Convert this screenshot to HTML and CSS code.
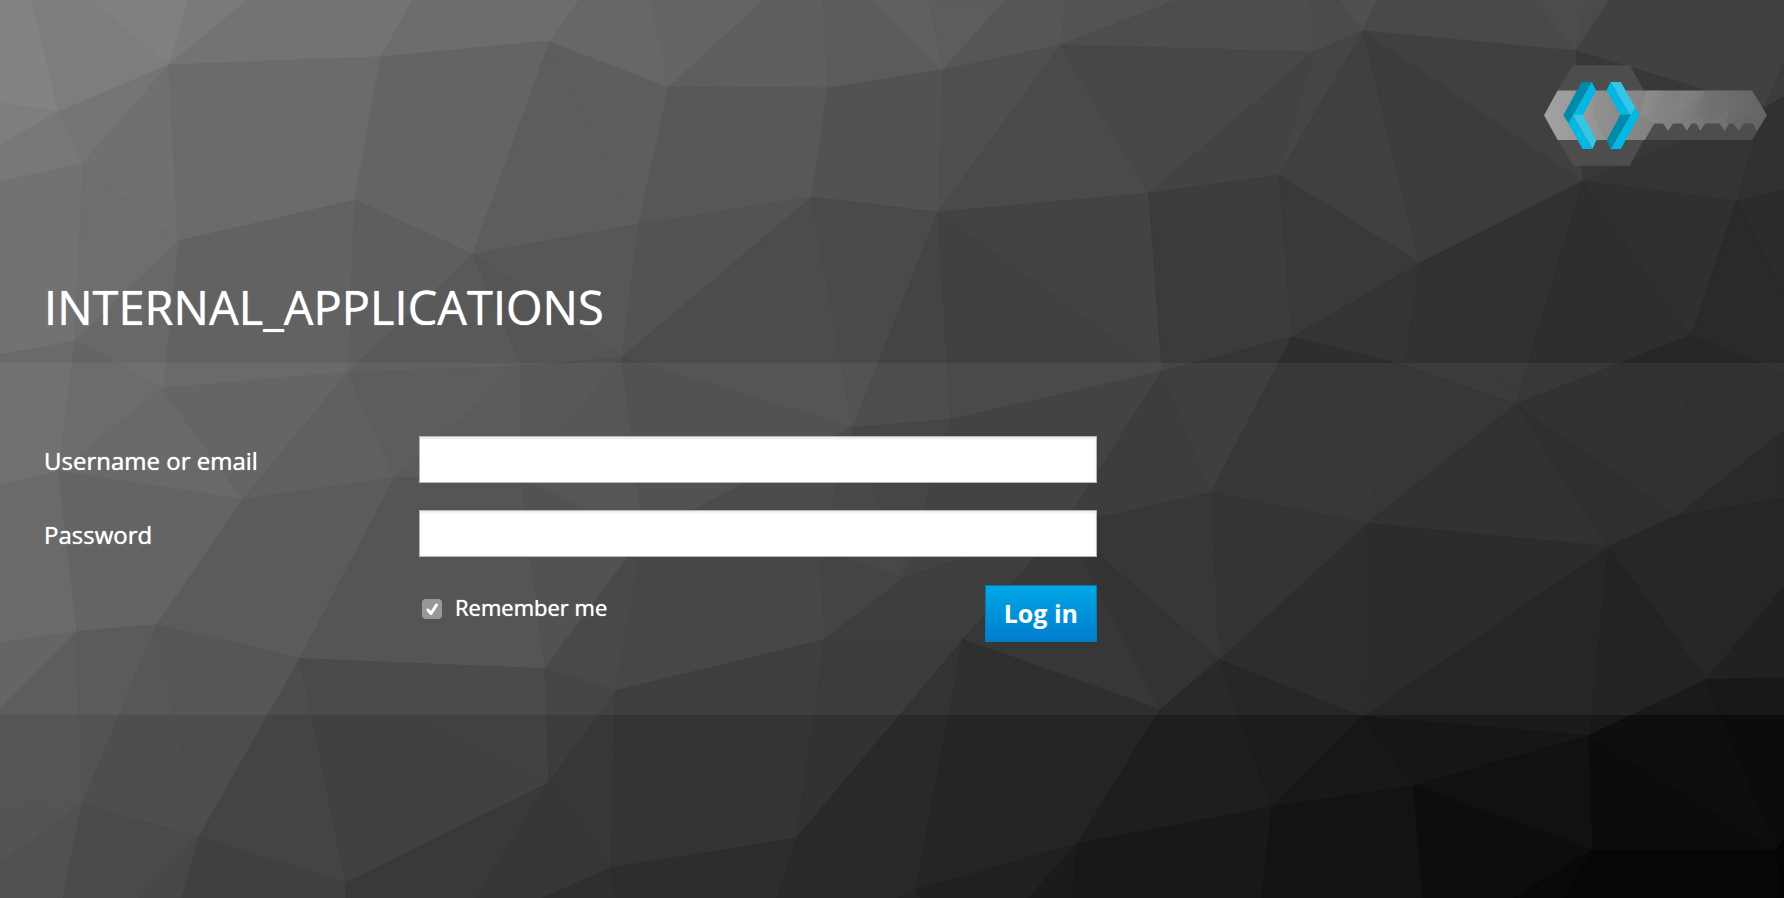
FILE: index.html
```html
<!DOCTYPE html>
<html lang="en">
<head>
<meta charset="utf-8">
<title>Log in to internal_applications</title>
<link rel="stylesheet" href="styles.css">
</head>
<body>
<div class="page">
  <svg class="backdrop" id="backdrop" viewBox="0 0 1784 897" preserveAspectRatio="none" aria-hidden="true"></svg>

  <header class="header">
    <svg class="logo" viewBox="40 43 675 304" role="img" aria-label="Keycloak">
      <defs>
        <linearGradient id="shaft" x1="0" y1="0" x2="1" y2="0">
          <stop offset="0" stop-color="#a2a2a2"/>
          <stop offset="0.4" stop-color="#8c8c8c"/>
          <stop offset="0.75" stop-color="#757575"/>
          <stop offset="1" stop-color="#686868"/>
        </linearGradient>
      </defs>
      <path fill="#4d4d4d" d="M83 120 130 44H300L342 120H668L713 194 668 269H342L300 346H130L83 269Z"/>
      <path fill="url(#shaft)" d="M83 120H668L713 194 683 241 670 219H643L628 241 612 219H600L585 241 570 219H527L512 241 500 219H486L472 241 458 219H430L416 241 400 219H374L345 269H83L42 194Z"/>
      <path fill="#000" fill-opacity="0.03" d="M196 120 190 194 228 269H345L374 219 330 194 350 120ZM530 120 490 194 540 219 600 178 713 206V194L668 120Z"/>
      <path fill="#000" fill-opacity="0.05" d="M600 178 588 219H612L628 241 643 219H670L683 241 706 206Z"/>
      <path fill="#fff" fill-opacity="0.03" d="M350 120H395L366 194 330 194ZM460 120H530L450 190 425 180Z"/>
      <path fill="#008aaa" d="M155 94H186L131 192 116 219 100 194Z"/>
      <path fill="#00b8e3" d="M186 94 199 120 158 194H130ZM130 194 188 296H158L115 218Z"/>
      <path fill="#33c6e9" d="M130 192H158L199 270 188 296Z"/>
      <path fill="#33c6e9" d="M242 94H273L317 172 302 194Z"/>
      <path fill="#00b8e3" d="M242 94 230 120 272 194H302ZM317 172 329 194 273 296H242L302 194Z"/>
      <path fill="#008aaa" d="M272 192H303L243 296 230 270Z"/>
    </svg>
    <h1 class="title">INTERNAL_APPLICATIONS</h1>
  </header>

  <main class="panel">
    <form class="form">
      <label class="label" for="username">Username or email</label>
      <input class="field" id="username" name="username" type="text">
      <label class="label" for="password">Password</label>
      <input class="field" id="password" name="password" type="password">
      <div class="actions">
        <label class="remember" for="remember">
          <span class="tick">
            <input class="tick-box" id="remember" name="remember" type="checkbox" checked>
            <svg class="tick-mark" viewBox="0 0 20 20" aria-hidden="true"><path d="M6 11 9 14.500 14.500 6"/></svg>
          </span>
          Remember me
        </label>
        <button class="login" type="button">Log in</button>
      </div>
    </form>
  </main>
</div>
<script src="mesh.js"></script>
</body>
</html>
```

FILE: styles.css
```css
* {
  box-sizing: border-box;
}

body {
  margin: 0;
  background: #1a1a1a;
  color: #fff;
  font-family: "Open Sans", "Liberation Sans", sans-serif;
}

.page {
  position: relative;
  min-height: 100vh;
  overflow: hidden;
  isolation: isolate;
}

.backdrop {
  position: absolute;
  inset: 0;
  z-index: -1;
  width: 100%;
  height: 100%;
}

.backdrop polygon {
  fill: currentColor;
  stroke: currentColor;
  stroke-width: 1;
}

.header {
  display: flex;
  flex-direction: column;
  padding: 65px 16px 25px 44px;
}

.logo {
  align-self: flex-end;
  width: 225px;
  height: 101px;
}

.title {
  margin: 110px 0 0;
  font-size: 47px;
  font-weight: 400;
  line-height: 62px;
}

.title,
.label,
.remember {
  text-shadow: 0 0 1px #fff;
}

.panel {
  padding: 73px 44px;
  background: rgba(255, 255, 255, 0.05);
}

.form {
  display: grid;
  grid-template-columns: minmax(120px, 375px) 1fr;
  row-gap: 27px;
  max-width: 1053px;
}

.label {
  padding-top: 2px;
  align-self: center;
  font-size: 24px;
  line-height: 32px;
}

.field {
  width: 100%;
  height: 47px;
  padding: 4px 12px;
  border: 1px solid #b6b6b6;
  border-radius: 0;
  background: #fff;
  box-shadow: inset 0 2px 2px rgba(0, 0, 0, 0.08);
  color: #333;
  font: inherit;
  font-size: 24px;
}

.actions {
  grid-column: 2;
  display: flex;
  align-items: flex-start;
  justify-content: space-between;
  padding-top: 1px;
}

.remember {
  display: flex;
  align-items: center;
  gap: 13px;
  padding: 6px 3px;
  font-size: 22px;
  line-height: 32px;
}

.tick {
  display: grid;
  padding-top: 4px;
}

.tick-box,
.tick-mark {
  grid-area: 1 / 1;
  width: 20px;
  height: 20px;
  margin: 0;
}

.tick-box {
  appearance: none;
  border-radius: 4px;
  background: #97979e;
}

.tick-mark {
  fill: none;
  stroke: #fff;
  stroke-width: 3;
  stroke-linecap: round;
  stroke-linejoin: round;
  pointer-events: none;
  visibility: hidden;
}

.tick-box:checked + .tick-mark {
  visibility: visible;
}

.login {
  padding: 11px 18px;
  border: 1px solid #0e78ae;
  border-radius: 0;
  background: linear-gradient(#00a8e5, #007dcf);
  color: #fff;
  font: inherit;
  font-size: 25px;
  font-weight: 700;
  line-height: 33px;
}
```

FILE: mesh.js
```js
// Low-poly backdrop: named vertices, then faces listed as "vertices : grey level".
const points = {
  A: "169,65", B: "59,112", C: "83,163", D: "178,241", E: "381,57", F: "550,41",
  G: "355,200", H: "473,254", I: "75,341", J: "163,388", K: "348,372", L: "522,366",
  M: "669,87", N: "828,88", O: "943,70", P: "1061,45", Q: "812,197", R: "938,212",
  S: "1149,193", T: "622,357", U: "853,427", V: "951,419", W: "1162,371", X: "639,224",
  Y: "1314,52", Z: "1363,31",
  a: "1576,51", b: "1279,175", c: "1420,263", d: "1583,181", e: "1737,201", f: "1691,335",
  g: "1292,337", h: "1516,404", i: "1405,365", j: "1764,108", k: "243,499", l: "59,471",
  m: "77,631", n: "157,624", o: "300,658", p: "545,668", q: "395,477", r: "82,804",
  s: "199,836", t: "346,882", u: "549,782", v: "521,479", w: "644,535",
  x1: "616,690", y1: "825,639", z1: "820,549",
  A2: "904,577", B2: "963,639", C2: "1064,525", D2: "1160,709", E2: "1219,659", F2: "797,837",
  G2: "916,889", H2: "1077,843", I2: "611,867", J2: "1272,806", K2: "1367,523", L2: "1608,546",
  M2: "1678,515", N2: "1706,679", O2: "1362,716", P2: "1589,735", Q2: "1414,785",
  R2: "1593,849", S2: "1777,849", g2: "1211,492"
};

const faces = `
0,0 32,0 B 0,103:131
32,0 92,0 A B:125
92,0 189,0 A:128
189,0 248,0 A:122
248,0 413,0 E A:115
413,0 580,0 F E:109
0,103 B 0,145:126
0,145 B C 0,182:120
B A C:117
0,182 C I 0,354:114
C A D:112
C D I:110
A E G D:107
E F H G:100
D G K J:98
D J I:104
G H K:94
H L K:89
F X H:93
F M X:94
580,0 651,0 M F:103
651,0 764,0 M:101
764,0 823,0 N M:94
823,0 872,0 O N:91
872,0 929,0 O:96
929,0 1006,0 O:93
1006,0 1066,0 P O:86
1066,0 1177,0 P:83
1177,0 1311,0 Y P:77
M Q X:87
M N Q:88
N O R Q:82
O P R:79
P S R:74
P Y S:71
1311,0 1340,0 Z Y:75
1340,0 1377,0 Z:80
1377,0 1533,0 a Z:73
1533,0 1586,0 a:76
1586,0 1610,0 a:74
1610,0 1784,0 1784,62 j a:65
1784,62 1784,97 j:60
Y b S:67
Y Z b:69
Z c b:64
Z d c:60
Z a d:64
a j d:56
j e d:52
j 1784,97 1784,189 e:49
H X T:87
H T L:85
X Q T:83
Q U T:76
Q R U:74
R V U:68
R W V:65
R S W:67
S g W:59
S b g:61
b c g:57
g c i:52
c h i:50
c d h:49
d f h:46
d e f:48
e 1784,189 1784,290:44
e 1784,290 1784,373 f:42
0,354 I l 0,485:106
I J l:101
0,485 l m 0,642:99
l J k:97
l k n m:92
J K k:93
K q k:88
K L q:85
L v q:83
L T v:80
T w v:77
T U w:73
n k q o:83
q v p o:76
v w p:73
w x1 p:64
w z1 y1 x1:62
w U z1:66
U A2 z1:63
U V A2:61
z1 A2 y1:58
V W C2 A2:57
A2 C2 B2:52
A2 B2 y1:52
W g2 C2:51
W g g2:53
g i K2 g2:46
i h K2:45
h L2 K2:39
h M2 L2:36
h f M2:39
f 1784,373 1784,430 M2:38
M2 1784,430 1784,498:31
M2 1784,498 1784,587 N2:27
N2 1784,587 1784,677:22
M2 N2 L2:28
L2 N2 P2:24
L2 P2 O2:27
L2 O2 K2:33
K2 O2 E2:34
g2 K2 E2:42
g2 E2 C2:45
C2 E2 D2:41
C2 D2 B2:45
0,642 m 0,708:93
0,708 m r 0,806:85
m n r:83
n s r:78
n o s:77
o t s:68
o u t:65
o p u:66
p x1 u:60
u x1 I2:55
x1 y1 F2 I2:52
y1 B2 F2:50
B2 G2 F2:41
B2 H2 G2:37
B2 D2 H2:36
D2 J2 H2:30
D2 E2 J2:30
E2 O2 J2:28
O2 Q2 J2:24
O2 P2 Q2:22
P2 R2 Q2:17
P2 S2 R2:12
P2 N2 S2:14
N2 1784,677 1784,838 S2:12
0,806 r 0,863:84
0,863 r 63,898 0,898:81
r s 138,898 63,898:74
s 182,898 138,898:71
s t 346,898 182,898:64
t u 476,898 346,898:57
u I2 541,898 476,898:54
I2 616,898 541,898:47
I2 F2 777,898 616,898:45
F2 G2 896,898 777,898:41
G2 923,898 896,898:37
G2 H2 1028,898 923,898:32
H2 1073,898 1028,898:27
H2 J2 1262,898 1073,898:24
J2 Q2 1423,898 1262,898:19
Q2 R2 1512,898 1423,898:13
R2 1564,898 1512,898:9
R2 S2 1784,898 1564,898:6
S2 1784,838 1784,898:4
`;

const backdrop = document.getElementById("backdrop");
for (const line of faces.trim().split("\n")) {
  const [corners, grey] = line.split(":");
  const face = document.createElementNS("http://www.w3.org/2000/svg", "polygon");
  face.setAttribute("points", corners.split(" ").map((c) => points[c] || c).join(" "));
  face.setAttribute("color", `rgb(${grey},${grey},${grey})`);
  backdrop.append(face);
}
```
